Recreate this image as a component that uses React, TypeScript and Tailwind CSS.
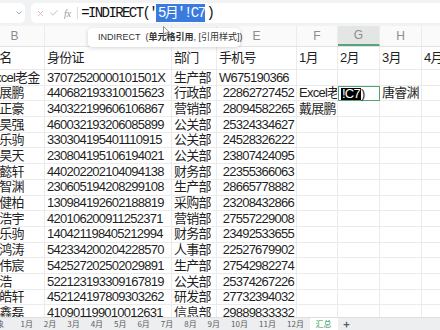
import { X, Check } from "lucide-react";

const cols = [60, 127, 45, 80, 41, 42, 42, 42];
// C and D sit under the function tooltip in the picture
const letters = ["B", "", "", "E", "F", "G", "H", "I"];

const rows: string[][] = [
  ["Excel老金", "37072520000101501X", "生产部", "W675190366"],
  ["戴展鹏", "440682193310015623", "行政部", "22862727452"],
  ["李正豪", "340322199606106867", "营销部", "28094582265"],
  ["张昊强", "460032193206085899", "公关部", "25324334627"],
  ["王乐驹", "330304195401110915", "公关部", "24528326222"],
  ["刘昊天", "230804195106194021", "公关部", "23807424095"],
  ["陈懿轩", "440202202104094138", "财务部", "22355366063"],
  ["杨智渊", "230605194208299108", "生产部", "28665778882"],
  ["赵健柏", "130984192602188819", "采购部", "23208432866"],
  ["黄浩宇", "420106200911252371", "营销部", "27557229008"],
  ["周乐驹", "140421198405212994", "财务部", "23492533655"],
  ["吴鸿涛", "542334200204228570", "人事部", "22527679902"],
  ["徐伟宸", "542527202502029891", "生产部", "27542982274"],
  ["孙浩", "522123193309167819", "公关部", "25374267226"],
  ["马皓轩", "452124197809303262", "研发部", "27732394032"],
  ["朱鑫磊", "410901199010012631", "信息部", "29889833332"],
];

const tabs = ["1月", "2月", "3月", "4月", "5月", "6月", "7月", "8月", "9月"];
const tabs2 = ["10月", "11月", "12月"];

function Cell({ w, children, right, className = "" }: { w: number; children?: React.ReactNode; right?: boolean; className?: string }) {
  return (
    <div
      style={{ width: w }}
      className={`shrink-0 h-full flex items-center px-[2px] overflow-hidden whitespace-nowrap border-r border-b border-[#ebebeb] ${right ? "justify-end" : ""} ${className}`}
    >
      {children}
    </div>
  );
}

export default function App() {
  return (
    <div className="w-[440px] h-[330px] overflow-hidden relative bg-white flex flex-col font-['Liberation_Sans','Noto_Sans_CJK_SC',sans-serif] text-[#1f1f1f]">
      {/* Formula bar */}
      <div className="h-[26px] shrink-0 bg-[#f1f2f3] flex items-center gap-[6px] py-[3px]">
        <div className="-ml-[10px] w-[35px] h-full bg-white rounded-[5px] flex items-center justify-end pr-[3px]">
          <svg width="6" height="4" viewBox="0 0 6 4" fill="none" stroke="#a8a8a8" strokeWidth="1">
            <path d="M0.5 0.5 L3 3 L5.5 0.5" />
          </svg>
        </div>
        <div className="flex-1 -mr-[10px] h-full bg-white rounded-[5px] flex items-center">
          <X size={9} strokeWidth={2} className="ml-[5px] text-[#d2a7a7]" />
          <Check size={10} strokeWidth={2} className="ml-[4px] text-[#a9b8ad]" />
          <span className="ml-[5px] text-[10px] italic font-['Liberation_Serif',serif] text-[#9a9a9a]">fx</span>
          <div className="ml-[6px] w-px h-[12px] bg-[#dcdcdc]" />
          <div className="ml-[3px] flex items-center font-['Liberation_Mono','Noto_Sans_CJK_SC',monospace] text-[14px] tracking-[-1.6px] text-[#111] leading-none">
            <span>=INDIRECT('</span>
            <span className="bg-[#3b7be0] text-white pl-[2px] pr-[1px] py-[2px]">5月'!C7</span>
            <span className="pl-[1px]">)</span>
          </div>
        </div>
      </div>

      {/* Column letters */}
      <div className="h-[21px] shrink-0 flex -ml-[15px] bg-[#fafafa] border-b border-[#e2e2e2]">
        {cols.map((w, i) => (
          <div
            key={i}
            style={{ width: w }}
            className={`shrink-0 h-full flex items-center justify-center text-[12px] text-[#8d8d8d] border-r border-[#ececec] ${i === 5 ? "bg-[#e4e6e5] border-b-[2px] border-b-[#5aa47c]" : ""}`}
          >
            {letters[i]}
          </div>
        ))}
      </div>

      {/* Grid */}
      <div className="flex-1 overflow-hidden text-[13px] tracking-[-0.75px]">
        <div className="h-[23px] flex -ml-[15px]">
          <Cell w={cols[0]}>姓名</Cell>
          <Cell w={cols[1]}>身份证</Cell>
          <Cell w={cols[2]}>部门</Cell>
          <Cell w={cols[3]}>手机号</Cell>
          <Cell w={cols[4]}>1月</Cell>
          <Cell w={cols[5]}>2月</Cell>
          <Cell w={cols[6]}>3月</Cell>
          <Cell w={cols[7]}>4月</Cell>
        </div>
        {rows.map((r, i) => (
          <div key={i} className="h-[15.7px] flex -ml-[15px]">
            <Cell w={cols[0]}>{r[0]}</Cell>
            <Cell w={cols[1]}>{r[1]}</Cell>
            <Cell w={cols[2]}>{r[2]}</Cell>
            <Cell w={cols[3]} right={i > 0}>{r[3]}</Cell>
            <Cell w={cols[4]}>{i === 1 ? "Excel老" : i === 2 ? "戴展鹏" : ""}</Cell>
            {i === 1 ? (
              <div style={{ width: cols[5] }} className="shrink-0 h-full flex items-center pl-[2px] border-[1.5px] border-[#4ea57a] bg-white">
                <span className="bg-black text-white px-[1px] leading-[12px]">!C7</span>
                <span>)</span>
              </div>
            ) : (
              <Cell w={cols[5]} />
            )}
            <Cell w={cols[6]}>{i === 1 ? "唐睿渊" : ""}</Cell>
            <Cell w={cols[7]} />
          </div>
        ))}
      </div>

      {/* Sheet tabs */}
      <div className="h-[13px] shrink-0 flex items-center bg-[#eceef0] border-t border-[#dedede] text-[8px] text-[#5c5c5c] font-['Noto_Sans_CJK_SC',sans-serif]">
        <div className="w-[15px] h-full flex items-center justify-end overflow-hidden pr-[11px]">
          <span className="whitespace-nowrap">对象</span>
        </div>
        {tabs.map((t) => (
          <div key={t} className="w-[23.4px] shrink-0 text-center">{t}</div>
        ))}
        {tabs2.map((t) => (
          <div key={t} className="w-[28px] shrink-0 text-center">{t}</div>
        ))}
        <div className="w-[28px] shrink-0 h-full bg-white flex items-center justify-center text-[#1f9a57]">汇总</div>
        <div className="w-[18px] shrink-0 text-center text-[11px] font-bold leading-none">+</div>
      </div>

      {/* Function tooltip */}
      <div className="absolute left-[88px] top-[28px] w-[152px] h-[19px] bg-white rounded-[4px] shadow-[0_1px_4px_rgba(0,0,0,0.18)] flex items-center pl-[10px] text-[9px] text-[#333] whitespace-nowrap">
        <span>INDIRECT</span>
        <span className="ml-[5px]">(</span>
        <span className="font-bold">单元格引用</span>
        <span>,&nbsp;[引用样式])</span>
      </div>

      {/* Mouse pointer */}
      <svg className="absolute left-[163px] top-[26px]" width="7" height="11" viewBox="0 0 7 11">
        <path d="M0.5 0.5 L0.5 8.5 L2.5 6.8 L4 10 L5.2 9.4 L3.8 6.3 L6.3 6.2 Z" fill="white" stroke="#777" strokeWidth="0.8" />
      </svg>
    </div>
  );
}
